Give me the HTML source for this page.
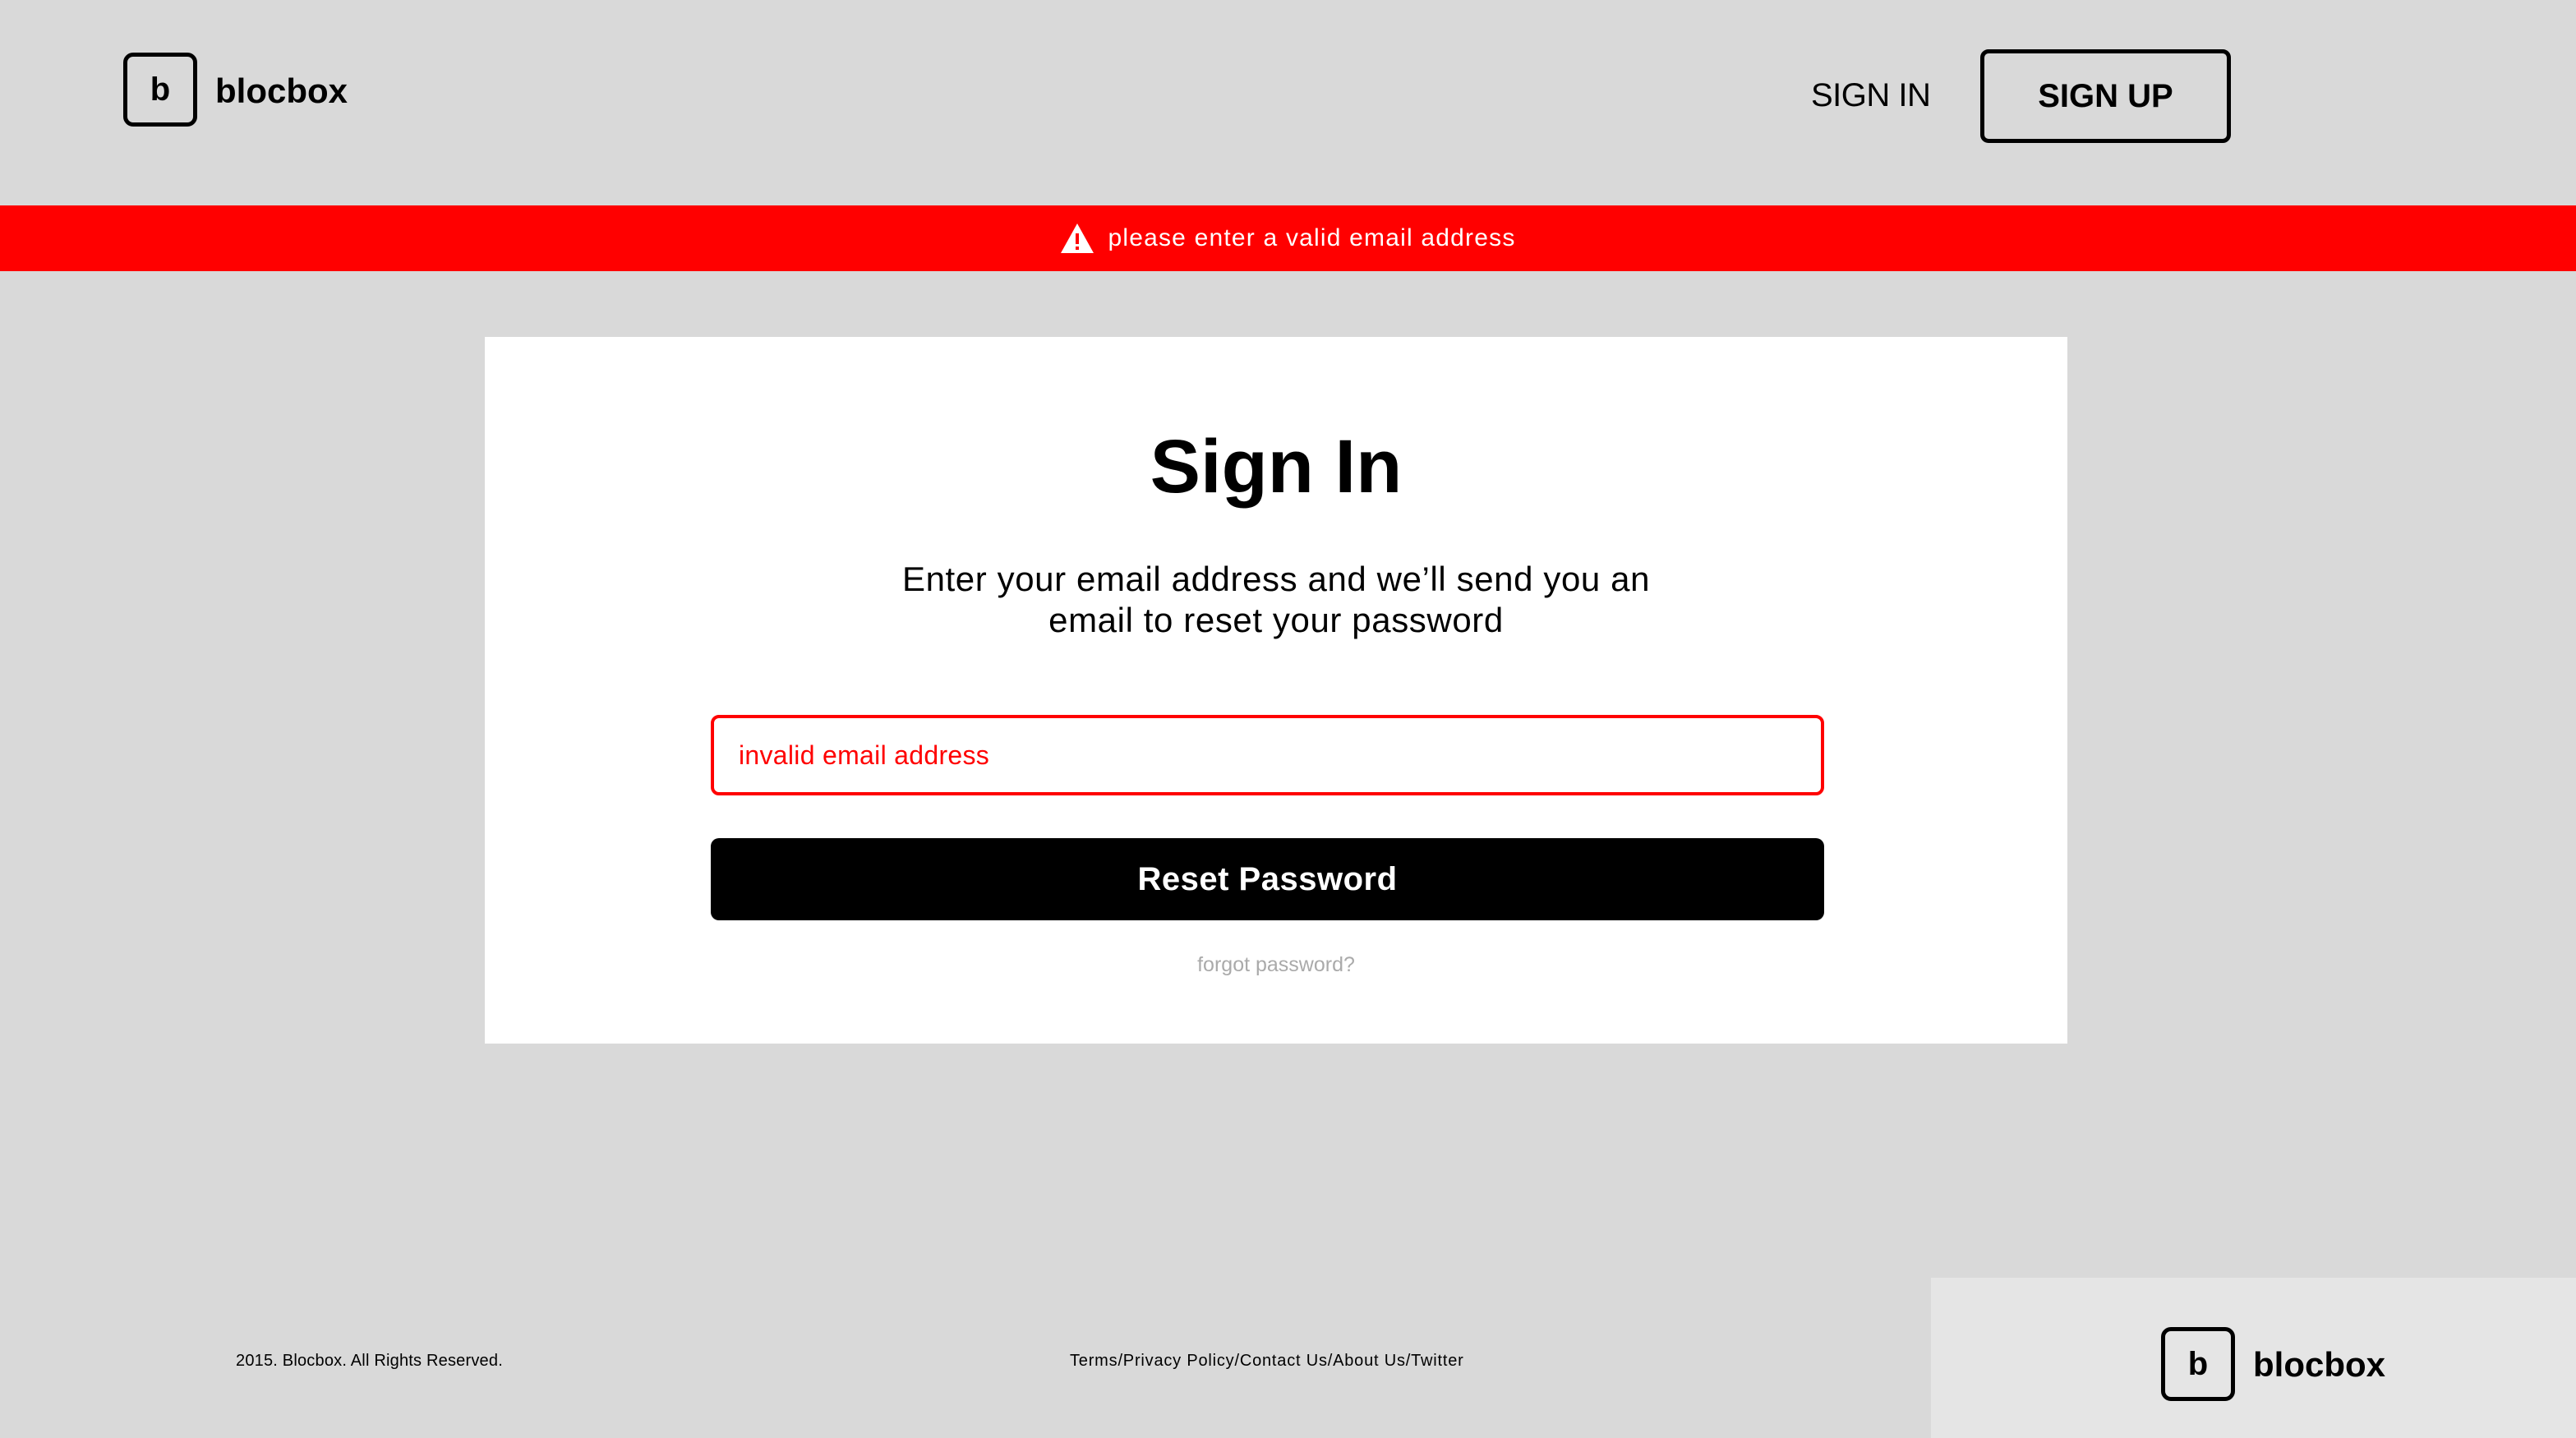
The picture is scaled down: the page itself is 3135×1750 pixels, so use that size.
<!DOCTYPE html>
<html><head><style>
*{margin:0;padding:0;box-sizing:border-box}
body{width:3135px;height:1750px;background:#d9d9d9;font-family:"Liberation Sans",sans-serif;position:relative;overflow:hidden;color:#000}
.abs{position:absolute}
.logo{position:absolute;width:90px;height:90px;border:5px solid #000;border-radius:12px;display:flex;align-items:center;justify-content:center;font-weight:bold;font-size:40px}
.lt{position:absolute;font-weight:bold;font-size:42px;line-height:1}
</style></head><body>
<div class="logo" style="left:150px;top:64px">b</div>
<div class="lt" style="left:262px;top:90px">blocbox</div>
<div class="abs" style="left:2204px;top:94px;font-size:40px;line-height:44px;letter-spacing:-0.5px">SIGN IN</div>
<div class="abs" style="left:2410px;top:60px;width:305px;height:114px;border:5px solid #000;border-radius:10px;display:flex;align-items:center;justify-content:center;font-weight:bold;font-size:40px">SIGN UP</div>
<div class="abs" style="left:0;top:250px;width:3135px;height:80px;background:#ff0000;display:flex;align-items:center;justify-content:center;color:#fff;font-size:30px;letter-spacing:1.2px">
<svg width="42" height="38" viewBox="0 0 42 38" style="margin-right:16px"><path d="M21 1 L41 37 L1 37 Z" fill="#fff"/><rect x="19" y="13" width="4" height="13" fill="#f00"/><rect x="19" y="29" width="4" height="4" fill="#f00"/></svg>
please enter a valid email address</div>
<div class="abs" style="left:590px;top:410px;width:1926px;height:860px;background:#fff"></div>
<div class="abs" style="left:590px;top:515px;width:1926px;text-align:center;font-weight:bold;font-size:92px;line-height:106px">Sign In</div>
<div class="abs" style="left:590px;top:680px;width:1926px;text-align:center;font-size:42px;line-height:50px;letter-spacing:0.6px">Enter your email address and we’ll send you an<br>email to reset your password</div>
<div class="abs" style="left:865px;top:870px;width:1355px;height:98px;border:4px solid #ff0000;border-radius:10px;color:#ff0000;font-size:32px;padding-left:30px;line-height:90px;letter-spacing:0.3px">invalid email address</div>
<div class="abs" style="left:865px;top:1020px;width:1355px;height:100px;background:#000;border-radius:10px;color:#fff;font-weight:bold;font-size:40px;display:flex;align-items:center;justify-content:center;letter-spacing:0.5px">Reset Password</div>
<div class="abs" style="left:590px;top:1160px;width:1926px;text-align:center;font-size:25px;color:#aaa">forgot password?</div>
<div class="abs" style="left:287px;top:1645px;font-size:20px;letter-spacing:0.2px">2015. Blocbox. All Rights Reserved.</div>
<div class="abs" style="left:1302px;top:1645px;font-size:20px;letter-spacing:0.8px">Terms/Privacy Policy/Contact Us/About Us/Twitter</div>
<div class="abs" style="left:2350px;top:1555px;width:785px;height:195px;background:#e5e5e5"></div>
<div class="logo" style="left:2630px;top:1615px;width:90px;height:90px">b</div>
<div class="lt" style="left:2742px;top:1640px">blocbox</div>
</body></html>
